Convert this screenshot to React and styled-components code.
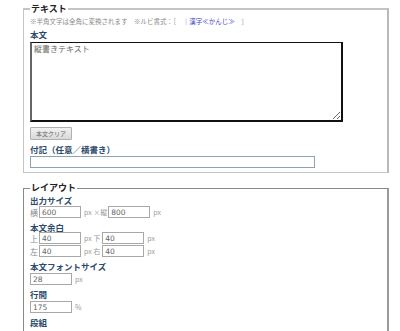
import React from 'react';
import styled, { createGlobalStyle } from 'styled-components';

const GlobalStyle = createGlobalStyle`
  html, body {
    margin: 0;
    padding: 0;
    background: #fff;
    font-family: "Noto Sans CJK JP", "DejaVu Sans", sans-serif;
  }
`;

const Page = styled.div`
  padding: 4px 11px 0 23px;
  width: 366px;
`;

const Group = styled.fieldset`
  margin: 0 0 ${p => p.$gap || 0}px 0;
  padding: 0 6px ${p => p.$pb || 4}px 6px;
  border: 1px solid ${p => p.$dark ? '#8a8a8a' : '#c4c4c4'};
  border-right: 2px solid ${p => p.$dark ? '#9a9a9a' : '#b8b8b8'};
  border-top-width: ${p => p.$dark ? 1 : 2}px;
  min-width: 0;
`;

const Legend = styled.legend`
  padding: 0 1px;
  margin-left: 0;
  font-size: 9px;
  line-height: 10px;
  font-weight: bold;
  color: #222;
`;

const Note = styled.div`
  font-size: 6.5px;
  line-height: 8px;
  color: #8a8a8a;
  margin-top: 3px;
  white-space: nowrap;
`;

const Ruby = styled.span`
  color: #4444cc;
`;

const Label = styled.div`
  font-size: 8.5px;
  line-height: 10px;
  font-weight: bold;
  color: #2d4a6b;
  margin-top: ${p => p.$mt ?? 4}px;
  margin-bottom: ${p => p.$mb ?? 2}px;
`;

const TextArea = styled.textarea`
  display: block;
  box-sizing: border-box;
  width: 313px;
  height: 80px;
  margin: 0;
  padding: 1px 2px;
  resize: both;
  border: 2px solid #111;
  border-left-color: #666;
  border-top-width: 1.5px;
  font-family: "Noto Sans CJK JP", sans-serif;
  font-size: 8px;
  line-height: 10px;
  color: #666;
  outline: none;
`;

const Button = styled.button`
  display: block;
  box-sizing: border-box;
  width: 42px;
  height: 13px;
  margin-top: 5px;
  padding: 0;
  border: 1px solid #b0b0b0;
  border-radius: 1px;
  background: linear-gradient(#f2f2f2, #d8d8d8);
  font-family: "Noto Sans CJK JP", sans-serif;
  font-size: 6px;
  line-height: 11px;
  color: #666;
`;

const Wide = styled.input`
  display: block;
  box-sizing: border-box;
  width: 285px;
  height: 12px;
  margin: 0;
  border: 1px solid #8fa2b0;
  padding: 0 2px;
  outline: none;
`;

const Row = styled.div`
  display: flex;
  align-items: center;
  height: 12px;
  margin-bottom: ${p => p.$mb ?? 0}px;
  font-size: 7px;
  color: #999;
  white-space: nowrap;
`;

const Cap = styled.span`
  font-size: 8px;
  color: #888;
  width: 9px;
`;

const Small = styled.input`
  box-sizing: border-box;
  width: 42px;
  height: 12px;
  margin: 0 0 0 ${p => p.$ml || 0}px;
  padding: 0 2px;
  border: 1px solid #a8a8a8;
  font-family: "DejaVu Sans", sans-serif;
  font-size: 7.5px;
  color: #666;
  outline: none;
`;

const Unit = styled.span`
  margin-left: 3px;
  font-size: 7px;
  color: #999;
`;

export default function App() {
  return (
    <>
      <GlobalStyle />
      <Page>
        <Group $gap={10} $pb={4}>
          <Legend>テキスト</Legend>
          <Note>
            ※半角文字は全角に変換されます　※ルビ書式：［　<Ruby>｜漢字≪かんじ≫</Ruby>　］
          </Note>
          <Label $mt={4} $mb={3}>本文</Label>
          <TextArea defaultValue="縦書きテキスト" />
          <Button>本文クリア</Button>
          <Label $mt={4} $mb={2}>付記（任意／横書き）</Label>
          <Wide />
        </Group>

        <Group $dark $pb={20}>
          <Legend>レイアウト</Legend>
          <Label $mt={2} $mb={1}>出力サイズ</Label>
          <Row>
            <Cap>横</Cap>
            <Small defaultValue="600" />
            <Unit>px ×縦</Unit>
            <Small defaultValue="800" $ml={1} />
            <Unit>px</Unit>
          </Row>
          <Label $mt={4} $mb={0}>本文余白</Label>
          <Row $mb={1}>
            <Cap>上</Cap>
            <Small defaultValue="40" />
            <Unit>px 下</Unit>
            <Small defaultValue="40" $ml={2} />
            <Unit>px</Unit>
          </Row>
          <Row>
            <Cap>左</Cap>
            <Small defaultValue="40" />
            <Unit>px 右</Unit>
            <Small defaultValue="40" $ml={2} />
            <Unit>px</Unit>
          </Row>
          <Label $mt={4} $mb={2}>本文フォントサイズ</Label>
          <Row>
            <Small defaultValue="28" />
            <Unit>px</Unit>
          </Row>
          <Label $mt={4} $mb={2}>行間</Label>
          <Row>
            <Small defaultValue="175" />
            <Unit>%</Unit>
          </Row>
          <Label $mt={4} $mb={2}>段組</Label>
        </Group>
      </Page>
    </>
  );
}
